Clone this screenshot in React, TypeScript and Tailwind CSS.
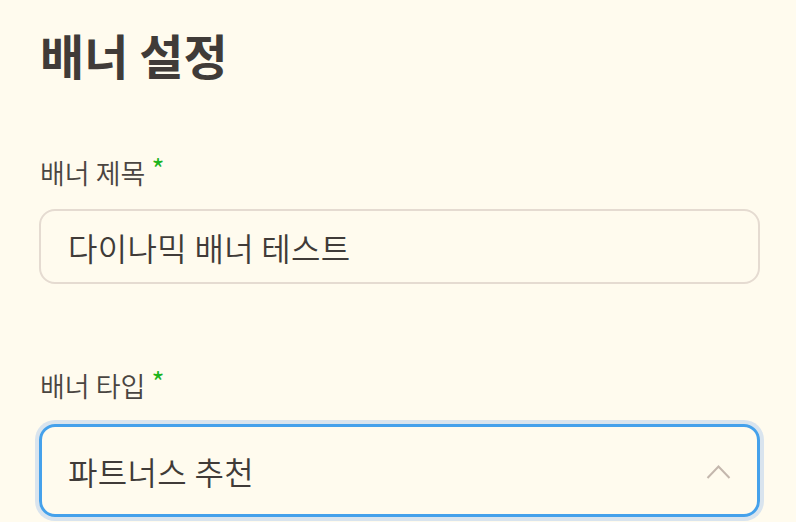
import React from 'react';

function Label({ text }: { text: string }) {
    return (
        <label className="flex items-start text-[27px] font-[350] leading-[32px] text-[#4a4541]">
            {text}
            <span className="ml-[6px] -mt-[2px] text-[28px] font-normal leading-[26px] text-[#1eb41e]">*</span>
        </label>
    );
}

export default function App() {
    return (
        <div className="min-h-[522px] w-full bg-[#fffbee] pl-[39px] pr-[36px] pt-[22px] font-['Noto_Sans_CJK_KR',sans-serif] text-[#403b38]">
            <h1 className="ml-px text-[48px] font-bold leading-[64px]">배너 설정</h1>

            <div className="mt-[71px] ml-px">
                <Label text="배너 제목" />
            </div>
            <div className="mt-[20px] flex h-[75px] items-center rounded-[16px] border-2 border-[#e5dbd1] px-[27px]">
                <span className="text-[32px] font-[350] tracking-[0.3px]">다이나믹 배너 테스트</span>
            </div>

            <div className="mt-[86px] ml-px">
                <Label text="배너 타입" />
            </div>
            <div className="mt-[22px] flex h-[93px] items-center justify-between rounded-[16px] border-[3px] border-[#45a1eb] pl-[26px] pr-[26px] ring-4 ring-[#d9e4ee]">
                <span className="text-[32px] font-[350] tracking-[0.3px]">파트너스 추천</span>
                <svg width="25" height="18" viewBox="0 0 25 18" fill="none">
                    <path d="M1.5 16L12.5 4.5L23.5 16" stroke="#c4b7ad" strokeWidth="2" />
                </svg>
            </div>
        </div>
    );
}
